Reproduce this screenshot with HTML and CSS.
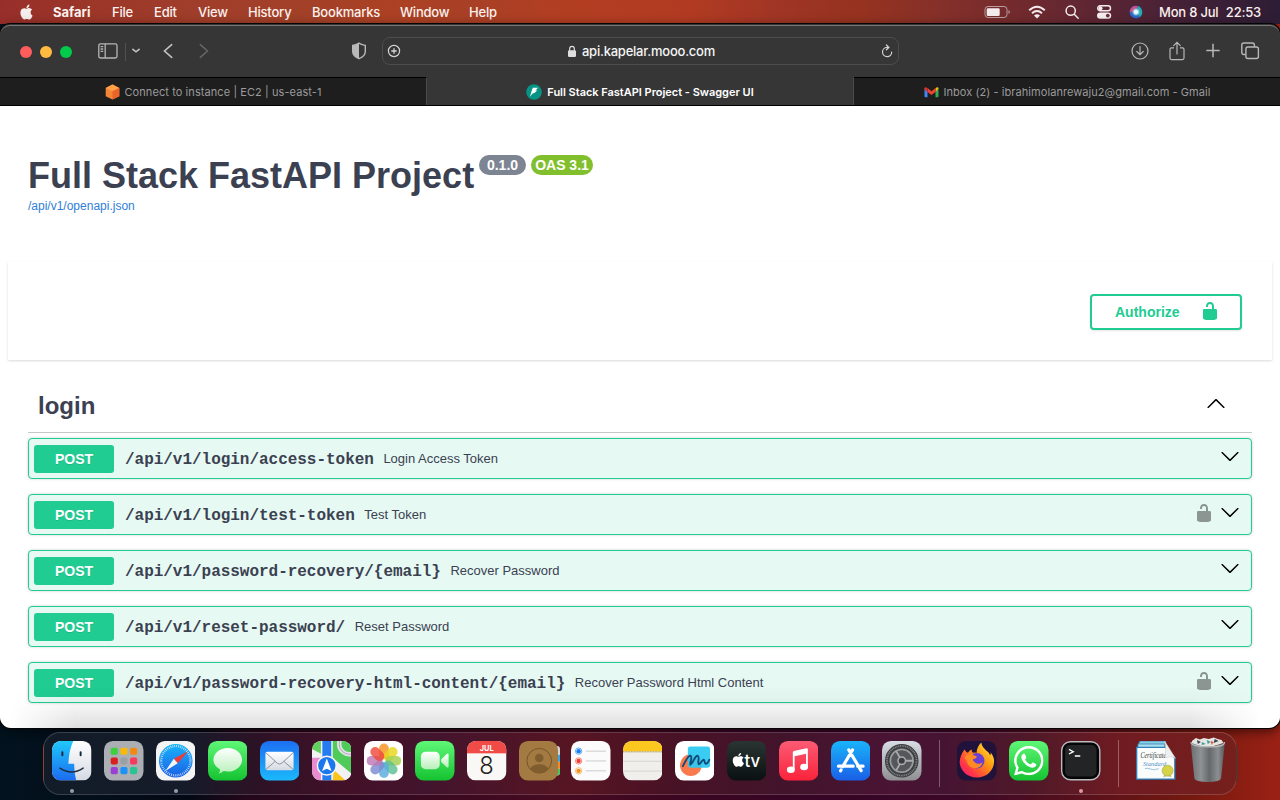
FILE: index.html
```html
<!DOCTYPE html>
<html lang="en">
<head>
<meta charset="utf-8">
<title>Full Stack FastAPI Project - Swagger UI</title>
<link rel="stylesheet" href="styles.css">
</head>
<body>
<svg class="defs" width="0" height="0">
  <defs>
    <symbol id="apple" viewBox="0 0 24 24"><path d="M12.152 6.896c-.948 0-2.415-1.078-3.96-1.04-2.04.027-3.91 1.183-4.961 3.014-2.117 3.675-.546 9.103 1.519 12.09 1.013 1.454 2.208 3.09 3.792 3.039 1.52-.065 2.09-.987 3.935-.987 1.831 0 2.35.987 3.96.948 1.637-.026 2.676-1.48 3.676-2.948 1.156-1.688 1.636-3.325 1.662-3.415-.039-.013-3.182-1.221-3.22-4.857-.026-3.04 2.48-4.494 2.597-4.559-1.429-2.09-3.623-2.324-4.39-2.376-2-.156-3.675 1.09-4.61 1.09zM15.53 3.83c.843-1.012 1.4-2.427 1.245-3.83-1.207.052-2.662.805-3.532 1.818-.78.896-1.454 2.338-1.273 3.714 1.338.104 2.715-.688 3.559-1.701"/></symbol>
    <symbol id="unlocked" viewBox="0 0 20 20"><path d="M15.8 8H14V5.6C14 2.703 12.665 1 10 1 7.334 1 6 2.703 6 5.6V6h2v-.801C8 3.754 8.797 3 10 3c1.203 0 2 .754 2 2.199V8H4c-.553 0-1 .646-1 1.199V17c0 .549.428 1.139.951 1.307l1.197.387C5.672 18.861 6.55 19 7.1 19h5.8c.549 0 1.428-.139 1.951-.307l1.196-.387c.524-.167.953-.757.953-1.306V9.199C17 8.646 16.352 8 15.8 8z"/></symbol>
    <symbol id="arrow" viewBox="0 0 20 20"><path d="M17.418 6.109c.272-.268.709-.268.979 0s.271.701 0 .969l-7.908 7.83c-.27.268-.707.268-.979 0l-7.908-7.83c-.27-.268-.27-.701 0-.969.271-.268.709-.268.979 0L10 13.25l7.418-7.141z"/></symbol>
    <linearGradient id="gBlue" x2="0" y2="1"><stop stop-color="#1d6ff2"/><stop offset="1" stop-color="#1bb8fb"/></linearGradient>
    <linearGradient id="gStore" x2="0" y2="1"><stop stop-color="#19b4fb"/><stop offset="1" stop-color="#1a5fe6"/></linearGradient>
    <linearGradient id="gFinder" x2="0" y2="1"><stop stop-color="#1fc8fb"/><stop offset="1" stop-color="#1b6cf0"/></linearGradient>
    <linearGradient id="gGreen" x2="0" y2="1"><stop stop-color="#5ff777"/><stop offset="1" stop-color="#15c331"/></linearGradient>
    <linearGradient id="gWhite" x2="0" y2="1"><stop stop-color="#fff"/><stop offset="1" stop-color="#d5dae3"/></linearGradient>
    <linearGradient id="gBubble" x2="0" y2="1"><stop stop-color="#fff"/><stop offset="1" stop-color="#b8f0b9"/></linearGradient>
    <linearGradient id="gMusic" x2="0" y2="1"><stop stop-color="#fb5b74"/><stop offset="1" stop-color="#fa233b"/></linearGradient>
    <linearGradient id="gGrey" x2="0" y2="1"><stop stop-color="#d7dde4"/><stop offset="1" stop-color="#8f8f92"/></linearGradient>
    <linearGradient id="gTv" x2="0" y2="1"><stop stop-color="#2a3533"/><stop offset="1" stop-color="#0a1011"/></linearGradient>
    <linearGradient id="gFox" x1="1" y1="0" x2="0" y2="1"><stop stop-color="#fff44f"/><stop offset=".4" stop-color="#ff980e"/><stop offset=".75" stop-color="#ff3647"/><stop offset="1" stop-color="#e31587"/></linearGradient>
    <linearGradient id="gBin" x2="1" y2="0"><stop stop-color="#6b6e70"/><stop offset=".3" stop-color="#8f9295"/><stop offset=".55" stop-color="#65696b"/><stop offset=".8" stop-color="#8c8f91"/><stop offset="1" stop-color="#55585a"/></linearGradient>
    <radialGradient id="gSiri"><stop stop-color="#fff"/><stop offset=".5" stop-color="#d5f3fb"/><stop offset="1" stop-color="#5cc8e0" stop-opacity=".2"/></radialGradient>
    <clipPath id="tile"><rect width="40" height="40" rx="9"/></clipPath>
  </defs>
</svg>

<header class="menubar">
  <svg class="apple-mark" width="15" height="15"><use href="#apple"/></svg>
  <nav class="menus">
    <span class="app-name">Safari</span><span>File</span><span>Edit</span><span>View</span><span>History</span><span>Bookmarks</span><span>Window</span><span>Help</span>
  </nav>
  <div class="status">
    <svg width="26" height="14" viewBox="0 0 26 14"><rect x="1" y="1.5" width="22" height="11" rx="3" fill="none" stroke="#b99da0"/><rect x="2.7" y="3.2" width="13" height="7.8" rx="1.3" fill="#f3ebec"/><path d="M24.5 5v4q1.3-.6 1.3-2t-1.3-2" fill="#b99da0"/></svg>
    <svg width="18" height="14" viewBox="0 0 18 14" fill="none" stroke="#f4ecee" stroke-width="2"><path d="M1.2 5.2Q9-1.8 16.8 5.2M4 8.2q5-4.3 10 0"/><path d="M6 10.4q3-2.2 6 0l-3 3z" fill="#f4ecee" stroke="none"/></svg>
    <svg width="14" height="14" viewBox="0 0 14 14" fill="none" stroke="#f4ecee" stroke-width="1.5"><circle cx="5.7" cy="5.7" r="4.6"/><path d="m9.2 9.2 4 4" stroke-linecap="round"/></svg>
    <svg width="16" height="14" viewBox="0 0 16 14"><rect x="1.7" y=".8" width="12.8" height="5" rx="2.5" fill="none" stroke="#f4ecee" stroke-width="1.4"/><circle cx="4.5" cy="3.3" r="2" fill="#f4ecee"/><rect x="1" y="7.4" width="14.2" height="6.4" rx="3.2" fill="#f4ecee"/><circle cx="11.8" cy="10.6" r="1.9" fill="#6c3040"/></svg>
    <svg width="14" height="14" viewBox="0 0 14 14"><circle cx="7" cy="7" r="6.9" fill="#2a2e55"/><path d="M.6 7A6.400 6.400 0 0 1 9 1L7 7z" fill="#c8508c"/><path d="M9 1A6.400 6.400 0 0 1 10.500 12.300L7 7z" fill="#2aa7b0"/><path d="M10.500 12.300A6.400 6.400 0 0 1 .6 7H7z" fill="#3465c7"/><circle cx="7" cy="7" r="4" fill="url(#gSiri)"/></svg>
    <span class="clock"><span>Mon 8 Jul</span><span>22:53</span></span>
  </div>
</header>

<main class="window">
  <div class="toolbar">
    <div class="lights"><i class="close"></i><i class="min"></i><i class="max"></i></div>
    <svg class="i-sidebar" width="20" height="16" viewBox="0 0 20 16" fill="none" stroke="#b5b5b5" stroke-width="1.3"><rect x=".8" y=".8" width="18.2" height="14.2" rx="1.8"/><path d="M7.2 1v14M2.6 3.7h2.6M2.6 6h2.6M2.6 8.3h2.6" /></svg>
    <i class="bar-divider"></i>
    <svg class="i-drop" width="10" height="6" viewBox="0 0 10 6"><path d="m1.9 1.3 3.1 2.500 3.100-2.500" fill="none" stroke="#c2c2c2" stroke-width="1.6" stroke-linecap="round"/></svg>
    <svg class="i-back" width="10" height="16" viewBox="0 0 10 16"><path d="M8.7 1.6 1.5 8l7.2 6.4" fill="none" stroke="#c2c2c2" stroke-width="1.6" stroke-linecap="round"/></svg>
    <svg class="i-forward" width="10" height="16" viewBox="0 0 10 16"><path d="M1.3 1.6 8.5 8l-7.2 6.4" fill="none" stroke="#656565" stroke-width="1.5" stroke-linecap="round"/></svg>
    <svg class="i-shield" width="16" height="18" viewBox="0 0 16 18"><path d="M8 1.2Q11 3 14.3 3.4v6.1q0 4.5-6.3 7.2-6.3-2.7-6.3-7.2V3.4Q5 3 8 1.2z" fill="none" stroke="#b9b9b9" stroke-width="1.4"/><path d="M8 1.2v15.5Q1.7 14 1.7 9.5V3.4Q5 3 8 1.2z" fill="#b9b9b9"/></svg>
    <div class="address">
      <svg width="14" height="14" viewBox="0 0 14 14" fill="none" stroke="#d5d5d5" stroke-width="1.2"><circle cx="7" cy="7" r="5.6"/><path d="M7 4.300v5.400M4.300 7h5.400" stroke-width="1.3"/></svg>
      <span class="host"><svg width="10" height="13" viewBox="0 0 10 13"><rect x="1" y="5.3" width="8" height="6.7" rx="1.2" fill="#dedede"/><path d="M2.7 6V3.6a2.3 2.3 0 0 1 4.6 0V6" fill="none" stroke="#dedede" stroke-width="1.2"/></svg><b>api.kapelar.mooo.com</b></span>
      <svg width="12" height="14" viewBox="0 0 12 14" fill="none" stroke="#d5d5d5" stroke-width="1.2"><path d="M7.500 3.400H6A4.600 4.600 0 1 0 10.700 8M5.400 1l2.500 2.400-2.500 2.400" stroke-linecap="round"/></svg>
    </div>
    <div class="actions">
      <svg width="20" height="20" viewBox="0 0 20 20" fill="none" stroke="#b8b8b8" stroke-width="1.2"><circle cx="10" cy="10" r="8"/><path d="M10 5.5v8M6.8 10.5l3.2 3.2 3.2-3.2" stroke-linecap="round"/></svg>
      <svg width="18" height="20" viewBox="0 0 18 20" fill="none" stroke="#b8b8b8" stroke-width="1.2"><path d="M6 6.800H3.500q-1.500 0-1.500 1.500v8.800q0 1.500 1.500 1.500h11q1.500 0 1.500-1.500V8.300q0-1.500-1.500-1.500H12"/><path d="M9 13V1.500M5.7 4.6 9 1.3l3.3 3.3" stroke-linecap="round"/></svg>
      <svg width="16" height="20" viewBox="0 0 16 20" stroke="#b8b8b8" stroke-width="1.5"><path d="M8 2.8v13.4M1.3 9.5h13.4"/></svg>
      <svg width="20" height="20" viewBox="0 0 20 20" fill="none" stroke="#b8b8b8" stroke-width="1.4"><rect x="5.900" y="6" width="12.500" height="11.500" rx="2"/><path d="M5.500 13.500H4q-2.200 0-2.200-2.200V4q0-2 2.200-2h8.200q2.200 0 2.200 2v2"/></svg>
    </div>
  </div>
  <div class="tabs">
    <div class="tab">
      <svg width="15" height="16" viewBox="0 0 15 16"><path d="M7.500.6 14.300 4v8.200l-6.800 3.300-6.800-3.300V4z" fill="#f58536"/><path d="M7.500.6 14.300 4 7.500 7.200.7 4z" fill="#ffa047"/><path d="M7.500 7.200 14.300 4v8.200l-6.800 3.300z" fill="#e9632b"/></svg>
      <span>Connect to instance | EC2 | us-east-1</span>
    </div>
    <div class="tab current">
      <svg width="16" height="16" viewBox="0 0 16 16"><circle cx="8" cy="8" r="7.800" fill="#069486"/><path d="M6.800 3.800h5.200L9.600 6.400h1.700L8 9.300H6.800L4 12.800l1.200-4.500z" fill="#fff"/></svg>
      <span>Full Stack FastAPI Project - Swagger UI</span>
    </div>
    <div class="tab mail">
      <svg width="15" height="12" viewBox="0 0 15 12"><path d="M.5 2v8.2q0 1 1 1h2V5z" fill="#4285f4"/><path d="M14.5 2v8.2q0 1-1 1h-2V5z" fill="#34a853"/><path d="m11.5 2.2.9-.8q2.1-.8 2.1 1.2L11.5 6z" fill="#fbbc04"/><path d="m3.5 2 4 3.2 4-3.2v4l-4 3.1-4-3.1z" fill="#ea4335"/><path d="M.5 2.6q0-2 2.1-1.2l.9.8V6l-3-2.3z" fill="#d93025"/></svg>
      <span>Inbox (2) - ibrahimolanrewaju2@gmail.com - Gmail</span>
    </div>
  </div>

  <section class="page">
    <div class="info">
      <h1>Full Stack FastAPI Project</h1>
      <span class="pill version">0.1.0</span><span class="pill oas">OAS 3.1</span>
      <a class="spec-link">/api/v1/openapi.json</a>
    </div>
    <div class="schemes">
      <button class="authorize"><span>Authorize</span><svg width="20" height="20"><use href="#unlocked"/></svg></button>
    </div>
    <div class="tag">
      <h2>login</h2>
      <svg class="up" width="20" height="20"><use href="#arrow"/></svg>
    </div>
    <div class="operations">
      <div class="op"><b class="method">POST</b><code>/api/v1/login/access-token</code><span class="summary">Login Access Token</span><svg class="down" width="20" height="20"><use href="#arrow"/></svg></div>
      <div class="op"><b class="method">POST</b><code>/api/v1/login/test-token</code><span class="summary">Test Token</span><svg class="lock" width="20" height="20"><use href="#unlocked"/></svg><svg class="down" width="20" height="20"><use href="#arrow"/></svg></div>
      <div class="op"><b class="method">POST</b><code>/api/v1/password-recovery/{email}</code><span class="summary">Recover Password</span><svg class="down" width="20" height="20"><use href="#arrow"/></svg></div>
      <div class="op"><b class="method">POST</b><code>/api/v1/reset-password/</code><span class="summary">Reset Password</span><svg class="down" width="20" height="20"><use href="#arrow"/></svg></div>
      <div class="op"><b class="method">POST</b><code>/api/v1/password-recovery-html-content/{email}</code><span class="summary">Recover Password Html Content</span><svg class="lock" width="20" height="20"><use href="#unlocked"/></svg><svg class="down" width="20" height="20"><use href="#arrow"/></svg></div>
    </div>
    <div class="page-shade"></div>
  </section>
</main>

<footer class="dock">
  <!-- Finder -->
  <div class="slot running"><svg viewBox="0 0 40 40"><g clip-path="url(#tile)"><rect width="40" height="40" fill="url(#gWhite)"/><path d="M0 0h21.5Q17 10 16.600 23h5.900q-.2 9 2 17H0z" fill="url(#gFinder)"/></g><path d="M10.500 11.500v3M29 11.500v3" stroke="#172b40" stroke-width="2" stroke-linecap="round"/><path d="M8 27.500q12 8 23.500 0" fill="none" stroke="#202c3c" stroke-width="1.500" stroke-linecap="round"/></svg></div>
  <!-- Launchpad -->
  <div class="slot"><svg viewBox="0 0 40 40"><rect width="40" height="40" rx="9" fill="#abafb4"/><g><rect x="6.800" y="6.800" width="7.200" height="7.200" rx="1.800" fill="#3ecf3d"/><rect x="16.600" y="6.800" width="7.200" height="7.200" rx="1.800" fill="#f9b90b"/><rect x="26.400" y="6.800" width="7.200" height="7.200" rx="1.800" fill="#f28a12"/><rect x="6.800" y="16.600" width="7.200" height="7.200" rx="1.800" fill="#d9201c"/><rect x="16.600" y="16.600" width="7.200" height="7.200" rx="1.800" fill="#9aa0a6"/><rect x="26.400" y="16.600" width="7.200" height="7.200" rx="1.800" fill="#f73a5d"/><rect x="6.800" y="26.400" width="7.200" height="7.200" rx="1.800" fill="#9a41d4"/><rect x="16.600" y="26.400" width="7.200" height="7.200" rx="1.800" fill="#1a93f5"/><rect x="26.400" y="26.400" width="7.200" height="7.200" rx="1.800" fill="#28c391"/></g></svg></div>
  <!-- Safari -->
  <div class="slot running"><svg viewBox="0 0 40 40"><rect width="40" height="40" rx="9" fill="#f4f4f5"/><circle cx="20" cy="20" r="17" fill="url(#gStore)"/><circle cx="20" cy="20" r="14.800" fill="none" stroke="#e3f3ff" stroke-width="2.400" stroke-dasharray=".7 1.240"/><path d="M32.500 10.500 22 22.500 18 18z" fill="#f03a35"/><path d="M9.500 30.500 18 18l4 4.500z" fill="#f3f5f7"/></svg></div>
  <!-- Messages -->
  <div class="slot"><svg viewBox="0 0 40 40"><rect width="40" height="40" rx="9" fill="url(#gGreen)"/><path d="M20 7c8.200 0 14.500 5.400 14.500 12S28.200 31 20 31q-2.200 0-4.200-.5-2 2-5 2.300 1.600-2 1.400-4Q5.500 25 5.500 19C5.500 12.400 11.800 7 20 7z" fill="url(#gBubble)"/></svg></div>
  <!-- Mail -->
  <div class="slot"><svg viewBox="0 0 40 40"><rect width="40" height="40" rx="9" fill="url(#gBlue)"/><rect x="5.500" y="11" width="28.500" height="18.500" rx="2" fill="url(#gWhite)"/><path d="m6 12 11.500 10.500q2.300 1.800 4.600 0L33.500 12M6 28.700l9.500-8.200M33.500 28.700 24 20.500" fill="none" stroke="#8b929b" stroke-width="1"/></svg></div>
  <!-- Maps -->
  <div class="slot"><svg viewBox="0 0 40 40"><g clip-path="url(#tile)"><rect width="40" height="40" fill="#f2f2f2"/><path d="M0 0h9v13L0 8z" fill="#65cf61"/><path d="M21 0h19v33L21 17z" fill="#4ecb59"/><path d="M0 17h9v23H0z" fill="#e88bd0"/><path d="M10.500 0h9v40h-9z" fill="#247cf0"/><path d="M22 29 34 40H21z" fill="#f9c51d"/><circle cx="38" cy="3" r="10.500" fill="none" stroke="#e0e2e6" stroke-width="4.500"/><circle cx="38" cy="3" r="10.500" fill="none" stroke="#aaaeb3" stroke-width="1"/></g><circle cx="15" cy="25" r="9.500" fill="#1a78ee" stroke="#f5f5f5" stroke-width="1.500"/><path d="m15 17.800 4.800 12.500-4.800-2.300-4.800 2.300z" fill="#fff"/></svg></div>
  <!-- Photos -->
  <div class="slot"><svg viewBox="0 0 40 40"><rect width="40" height="40" rx="9" fill="#fff"/><g class="petals"><rect x="15.300" y="2.500" width="9.800" height="16" rx="4.900" fill="#f99321"/><rect x="15.300" y="2.500" width="9.800" height="16" rx="4.900" fill="#e8d61c" transform="rotate(45 20.200 20)"/><rect x="15.300" y="2.500" width="9.800" height="16" rx="4.900" fill="#a4d04a" transform="rotate(90 20.200 20)"/><rect x="15.300" y="2.500" width="9.800" height="16" rx="4.900" fill="#5ebf93" transform="rotate(135 20.200 20)"/><rect x="15.300" y="2.500" width="9.800" height="16" rx="4.900" fill="#59acdf" transform="rotate(180 20.200 20)"/><rect x="15.300" y="2.500" width="9.800" height="16" rx="4.900" fill="#7d89cf" transform="rotate(225 20.200 20)"/><rect x="15.300" y="2.500" width="9.800" height="16" rx="4.900" fill="#bd78b5" transform="rotate(270 20.200 20)"/><rect x="15.300" y="2.500" width="9.800" height="16" rx="4.900" fill="#ef4b3b" transform="rotate(315 20.200 20)"/></g></svg></div>
  <!-- FaceTime -->
  <div class="slot"><svg viewBox="0 0 40 40"><rect width="40" height="40" rx="9" fill="url(#gGreen)"/><rect x="6" y="11" width="19" height="17.500" rx="4.500" fill="url(#gBubble)"/><path d="M26.500 18.500 32.300 13q1.700-1 1.700 1v11.500q0 2-1.700 1l-5.800-5.200z" fill="url(#gBubble)"/></svg></div>
  <!-- Calendar -->
  <div class="slot"><svg viewBox="0 0 40 40"><g clip-path="url(#tile)"><rect width="40" height="40" fill="#f9f8f7"/><rect width="40" height="12.500" fill="#f04b46"/></g><text x="20" y="9.800" class="cal-month">JUL</text><text x="19.800" y="33.500" class="cal-day">8</text></svg></div>
  <!-- Contacts -->
  <div class="slot"><svg viewBox="0 0 40 40" overflow="visible"><rect x="30" y="5" width="11.500" height="30" rx="3" fill="#d7d7d9"/><path d="M38 14h3.500v7H38z" fill="#36a6e5"/><path d="M38 21h3.500v7H38z" fill="#f58a20"/><path d="M38 28h3.500v4q0 2-2 3H38z" fill="#45c95a"/><rect width="39.500" height="40" rx="9" fill="#a27a42"/><g fill="none" stroke="#755427" stroke-width="1"><circle cx="20.500" cy="20" r="12.500"/></g><circle cx="20.500" cy="17.300" r="4.300" fill="#805d2e"/><path d="M11 28q3.500-4.500 9.500-4.500T30 28q-4 4.300-9.500 4.300T11 28z" fill="#805d2e"/></svg></div>
  <!-- Reminders -->
  <div class="slot"><svg viewBox="0 0 40 40"><rect width="40" height="40" rx="9" fill="#fbfbfb"/><path d="M15 10.300h20.500M15 20.200h20.500M15 30.200h20.500" stroke="#cbcbcb" stroke-width="1"/><g fill="none" stroke-width="1"><circle cx="7.700" cy="10.300" r="3.200" stroke="#5aa9f3"/><circle cx="7.700" cy="20.200" r="3.200" stroke="#f5857c"/><circle cx="7.700" cy="30.200" r="3.200" stroke="#f8bb6c"/></g><circle cx="7.700" cy="10.300" r="2.200" fill="#187cf0"/><circle cx="7.700" cy="20.200" r="2.200" fill="#f33b32"/><circle cx="7.700" cy="30.200" r="2.200" fill="#f3901c"/></svg></div>
  <!-- Notes -->
  <div class="slot"><svg viewBox="0 0 40 40"><g clip-path="url(#tile)"><rect width="40" height="40" fill="#f0efeb"/><rect width="40" height="10.500" fill="#fcc81f"/><path d="M0 11h40" stroke="#a6915a" stroke-dasharray="1 .6"/><path d="M0 20.500h40M0 30.500h40" stroke="#d0cfcc" stroke-width=".8"/></g></svg></div>
  <!-- Freeform -->
  <div class="slot"><svg viewBox="0 0 40 40"><rect width="40" height="40" rx="9" fill="#fff"/><circle cx="16" cy="24.500" r="11" fill="#fb7a4d"/><rect x="13" y="5.500" width="22.500" height="21.500" rx="2.500" fill="#2bc9f2" opacity=".93"/><path d="M8 25.500Q13.500 14 15.800 15c2.200 1-.8 6.500-.3 9 3-1.500 4.500-9.500 7.500-9 2.500.5-.5 7 1 8.500 2 .5 3-4.500 5-4.500 1.500.2.500 3.500 2 4 1.500.3 3-2 3.700-4" fill="none" stroke="#104a7a" stroke-width="1.900" stroke-linecap="round" stroke-linejoin="round"/></svg></div>
  <!-- TV -->
  <div class="slot"><svg viewBox="0 0 40 40"><rect width="40" height="40" rx="9" fill="url(#gTv)"/><use href="#apple" x="4.500" y="11.800" width="14" height="14.500" fill="#fff"/><text x="17.800" y="26" class="tv-text">tv</text></svg></div>
  <!-- Music -->
  <div class="slot"><svg viewBox="0 0 40 40"><rect width="40" height="40" rx="9" fill="url(#gMusic)"/><path d="M14 11.300q0-1 1-1.200l13-2.700q1.200-.2 1.200 1v17.800h-1.800V13l-11.600 2.400V29H14z" fill="#fff"/><ellipse cx="12" cy="29.200" rx="4" ry="3.300" fill="#fff"/><ellipse cx="25.400" cy="26.300" rx="4" ry="3.300" fill="#fff"/></svg></div>
  <!-- App Store -->
  <div class="slot"><svg viewBox="0 0 40 40"><rect width="40" height="40" rx="9" fill="url(#gStore)"/><g fill="none" stroke="#fff" stroke-width="3.200" stroke-linecap="round"><path d="m21.800 9-10 17M18 9l12.500 21M7.500 25.500h15M27 25.500h5.500M10.200 29.200l-.5 1"/></g></svg></div>
  <!-- System Preferences -->
  <div class="slot"><svg viewBox="0 0 40 40"><rect width="40" height="40" rx="9" fill="url(#gGrey)"/><circle cx="20" cy="20" r="17" fill="#3b3e40"/><circle cx="20" cy="20" r="15" fill="none" stroke="#85878a" stroke-width="1.800" stroke-dasharray="1 .8"/><circle cx="20" cy="20" r="11.500" fill="#55575a" stroke="#999b9d" stroke-width="1.800"/><g stroke="#a9abad" stroke-width="1.800"><path d="M20 20h11.500M20 20l-5.800-10M20 20l-5.800 10"/></g><circle cx="20" cy="20" r="3.800" fill="#3b3e40" stroke="#a9abad" stroke-width="1.500"/></svg></div>
  <i class="dock-divider"></i>
  <!-- Firefox -->
  <div class="slot"><svg viewBox="0 0 40 40"><rect width="40" height="40" rx="9" fill="#20123a"/><path d="M7.500 8.500q1.500 2.500 3.500 3.500 2-3 4-3.500-.5 2 1 3.500 2-.5 4 0-.5-5 4.500-10.500.8 4.500 5 8 3 1.500 4 5 1-1 .5-3Q38 17 37.500 21A17.400 16 0 0 1 2.700 21Q3 15 7.500 8.500z" fill="url(#gFox)"/><circle cx="20" cy="20" r="7.800" fill="#6a3fd4"/><path d="M7.500 17q3-5 7.500-4 2 2.500 5 2.500 0 2.500-4 3 .5 3 4.500 4.500 3 .5 5.500-1.500-2 6.500-8.500 6-6.500-1-7.500-7z" fill="#ff8a24"/></svg></div>
  <!-- WhatsApp -->
  <div class="slot"><svg viewBox="0 0 40 40"><rect width="40" height="40" rx="9" fill="url(#gGreen)"/><svg x="5" y="5" width="30" height="30" viewBox="0 0 24 24"><path fill="#fff" d="M17.472 14.382c-.297-.149-1.758-.867-2.03-.967-.273-.099-.471-.148-.67.15-.197.297-.767.966-.94 1.164-.173.199-.347.223-.644.075-.297-.15-1.255-.463-2.39-1.475-.883-.788-1.48-1.761-1.653-2.059-.173-.297-.018-.458.13-.606.134-.133.298-.347.446-.52.149-.174.198-.298.298-.497.099-.198.05-.371-.025-.52-.075-.149-.669-1.612-.916-2.207-.242-.579-.487-.5-.669-.51-.173-.008-.371-.01-.57-.01-.198 0-.52.074-.792.372-.272.297-1.04 1.016-1.04 2.479 0 1.462 1.065 2.875 1.213 3.074.149.198 2.096 3.2 5.077 4.487.709.306 1.262.489 1.694.625.712.227 1.36.195 1.871.118.571-.085 1.758-.719 2.006-1.413.248-.694.248-1.289.173-1.413-.074-.124-.272-.198-.57-.347m-5.421 7.403h-.004a9.87 9.87 0 01-5.031-1.378l-.361-.214-3.741.982.998-3.648-.235-.374a9.86 9.86 0 01-1.51-5.26c.001-5.45 4.436-9.884 9.888-9.884 2.64 0 5.122 1.03 6.988 2.898a9.825 9.825 0 012.893 6.994c-.003 5.45-4.437 9.884-9.885 9.884m8.413-18.297A11.815 11.815 0 0012.05 0C5.495 0 .16 5.335.157 11.892c0 2.096.547 4.142 1.588 5.945L.057 24l6.305-1.654a11.882 11.882 0 005.683 1.448h.005c6.554 0 11.89-5.335 11.893-11.893a11.821 11.821 0 00-3.48-8.413z"/></svg></svg></div>
  <!-- Terminal -->
  <div class="slot running warm"><svg viewBox="0 0 40 40"><rect x=".7" y=".7" width="38.600" height="38.600" rx="9" fill="#050505" stroke="#b9bdc2" stroke-width="1.400"/><rect x="4" y="4" width="32" height="32" rx="5" fill="#232425"/><path d="m8 8.500 4.500 2.300L8 13.200M14 15.200h5.500" fill="none" stroke="#fff" stroke-width="1.300"/></svg></div>
  <i class="dock-divider"></i>
  <!-- Documents stack -->
  <div class="slot"><svg viewBox="0 0 40 40"><path d="M4 0h26v10H2V4z" fill="#8bd0ea" stroke="#317ba6" stroke-width=".8"/><path d="M2 3h27v9H2z" fill="#a6deef" stroke="#317ba6" stroke-width=".8"/><path d="M.7 6.500h29L39.300 17.500V38.500H.7z" fill="#fafcfc" stroke="#2d7fb9" stroke-width="1.300"/><text x="4.500" y="17" class="cert-title" textLength="26" lengthAdjust="spacingAndGlyphs">Certificate</text><path d="M29 0 40 17.500q-5-3-10.500-.5Q31 9 29 0z" fill="#eef0f0" stroke="#c3c7c9" stroke-width=".5"/><text x="7" y="25" class="cert-sub">Standard</text><path d="M9 28q3-1 6 .5t8-.5" fill="none" stroke="#81b3d8" stroke-width=".8"/><path d="m29 33-1.500 4 4.500-1.500 4 1.500-1.500-4" fill="#bfc79a"/><circle cx="32" cy="30" r="5.500" fill="#d5d348" stroke="#a9a83f" stroke-width=".7"/></svg></div>
  <!-- Trash -->
  <div class="slot"><svg viewBox="0 0 40 40" overflow="visible"><path d="M4 0 8-3l4 1.500L16-3l5 1 5-1.500L30-2l4 1 2 3-16 5L4 3z" fill="#e5e5e2"/><path d="m9-1 4 2-3 2zM27-2l4 2-5 2z" fill="#39434e"/><path d="m14 1 4 2-4 1zM19-1l4 2-3 2z" fill="#3f9b9b"/><path d="m23 0 3 1-2 3z" fill="#dc583b"/><path d="M2.700 1.500q17.300 8 34.600 0L33.500 38q-1 3.500-13.500 3.500T6.500 38z" fill="url(#gBin)"/><path d="M3 1q0 4.500 17 5T37 1" fill="none" stroke="#bcbec0" stroke-width="1.200"/></svg></div>
</footer>
</body>
</html>
```

FILE: styles.css
```css
* { box-sizing: border-box; }

body {
  margin: 0;
  width: 1280px;
  height: 800px;
  overflow: hidden;
  display: flex;
  flex-direction: column;
  font-family: Inter, "Liberation Sans", sans-serif;
  background: linear-gradient(90deg, #02131f 0, #030914 190px, #24071b 245px, #350820 390px, #470b20 560px, #390522 700px, #360526 850px, #3c0827 960px, #57101c 1080px, #74190f 1190px, #9c2115 1280px);
}

.defs { position: absolute; }
svg { display: block; flex: none; }
i { display: block; flex: none; }

/* Menu bar */
.menubar {
  height: 24px;
  flex: none;
  display: flex;
  align-items: center;
  padding: 0 19px 1px 19px;
  color: #fbf1ee;
  font-size: 13px;
  font-weight: 500;
  letter-spacing: -.2px;
  background: linear-gradient(90deg, #982e2a 0, #9b3629 90px, #a03e2b 200px, #a24028 300px, #ac4124 400px, #a84026 470px, #b23e22 560px, #b13b22 690px, #a03525 780px, #96321f 860px, #85302a 940px, #712a2d 1020px, #592534 1110px, #3f2036 1200px, #2d1d36 1280px);
}
.apple-mark { fill: #f7ecec; width: 15px; height: 16px; }
.menus { display: grid; grid-template-columns: 59px 42px 44px 50px 64px 88px 69px 40px; margin-left: 19px; white-space: nowrap; }
.app-name { font-weight: 700; letter-spacing: 0; }
.status { display: flex; align-items: center; margin-left: auto; }
.status svg:nth-child(1) { margin-right: 18px; }
.status svg:nth-child(2) { margin-right: 19px; }
.status svg:nth-child(3) { margin-right: 17px; }
.status svg:nth-child(4) { margin-right: 17px; }
.clock { display: flex; justify-content: space-between; width: 102px; margin-left: 16px; }

/* Browser window */
.window {
  height: 704px;
  flex: none;
  display: flex;
  flex-direction: column;
  border-radius: 10px 10px 11px 11px;
  overflow: hidden;
  background: #363636;
  box-shadow: 0 0 0 1px #050505, 0 3px 12px rgba(0, 0, 0, .6);
}
.toolbar {
  height: 53px;
  flex: none;
  display: flex;
  align-items: center;
  padding-left: 20px;
  border-top: 1px solid #767676;
  border-radius: 10px 10px 0 0;
  margin-top: 1px;
}
.lights { display: flex; gap: 8px; }
.lights i { width: 12px; height: 12px; margin-top: -1px; border-radius: 50%; }
.close { background: #ff5d5b; }
.min { background: #ffbb3f; }
.max { background: #00cb4a; }
.toolbar > svg { margin-top: -2px; }
.toolbar > .i-sidebar { margin-left: 26px; }
.bar-divider { width: 1px; height: 18px; margin-left: 7px; background: #505050; }
.toolbar > .i-drop { margin-left: 5px; }
.toolbar > .i-back { margin-left: 22px; }
.toolbar > .i-forward { margin-left: 26px; }
.toolbar > .i-shield { margin-left: 142px; }
.address {
  display: flex;
  align-items: center;
  justify-content: space-between;
  width: 517px;
  height: 28px;
  margin: -2px 0 0 15px;
  padding: 0 5px 0 4px;
  border: 1px solid #4d4d4d;
  border-radius: 8px;
}
.host { display: flex; align-items: center; gap: 5px; color: #f5f5f5; font-size: 13px; }
.host b { font-weight: 500; letter-spacing: -.23px; }
.actions { display: flex; align-items: center; gap: 18px; margin: -3px 0 0 231px; }
.actions svg:nth-child(3) { margin-left: 1px; }
.actions svg:nth-child(4) { margin-left: 1px; }

.tabs { display: grid; grid-template-columns: 427px 427px 426px; height: 29px; flex: none; border-bottom: 1px solid #000; margin-top: -1px; }
.tab { display: flex; align-items: center; justify-content: center; gap: 5px; background: #1e1e1e; border-top: 1px solid #000; border-right: 1px solid #4a4a4a; color: #9b9b9b; font-size: 11px; font-weight: 400; letter-spacing: .08px; white-space: nowrap; }
.tab.current { background: #363636; border-top-color: #363636; color: #fff; font-weight: 600; letter-spacing: -.02px; }
.tab.mail { letter-spacing: .06px; border-right: 0; }

/* API documentation page */
.page { flex: 1; position: relative; background: #fff; color: #3b4151; font-family: "Liberation Sans", Arial, sans-serif; }
.info { display: flex; flex-wrap: wrap; align-items: flex-start; align-content: flex-start; height: 156px; padding: 49px 28px 0; }
h1 { margin: 0; font-size: 36px; line-height: 41px; width: 446px; white-space: nowrap; }
.pill { height: 20px; border-radius: 20px; color: #fff; font-size: 14px; line-height: 20px; font-weight: 700; text-align: center; white-space: nowrap; }
.version { width: 47px; margin-left: 5px; background: #7d8492; }
.oas { width: 62px; margin-left: 5px; background: #81bf2d; }
.spec-link { width: 100%; margin-top: 3px; color: #2f80d8; font-size: 12px; line-height: 14px; }
.schemes { display: flex; justify-content: flex-end; align-items: center; height: 98px; margin: 0 8px; padding: 2px 30px 0; background: #fff; box-shadow: 0 1px 2px rgba(0, 0, 0, .15); }
.authorize { display: flex; align-items: center; justify-content: space-between; width: 152px; height: 36px; padding: 0 20.500px 0 23px; border: 2px solid #20cc92; border-radius: 4px; background: #fff; color: #20cc92; fill: #20cc92; font: 700 14px "Liberation Sans", sans-serif; box-shadow: 0 1px 2px rgba(0, 0, 0, .1); }
.authorize svg { margin-bottom: 2px; }
.tag { display: flex; align-items: center; justify-content: space-between; height: 59px; margin: 14px 28px 0; padding: 0 26px 0 10px; border-bottom: 1px solid rgba(59, 65, 81, .3); }
.tag h2 { margin: 5px 0 0; font-size: 24px; line-height: 28px; }
.up { margin-top: 2px; transform: scaleY(-1); }
.operations { display: flex; flex-direction: column; gap: 15px; margin: 5px 28px 0; }
.op { display: flex; align-items: center; height: 41px; padding: 0 11px 0 5px; border: 1px solid #20cc92; border-radius: 4px; background: #e6f9f3; box-shadow: 0 0 3px rgba(0, 0, 0, .19); }
.method { width: 80px; height: 28px; margin-top: 1px; border-radius: 3px; background: #20cc92; color: #fff; font-size: 14px; line-height: 28px; text-align: center; text-shadow: 0 1px 0 rgba(0, 0, 0, .1); }
.op code { margin: 2px 0 0 11px; font: 700 16px "Liberation Mono", monospace; letter-spacing: -.03px; }
.summary { flex: 1; margin-left: 9.500px; font-size: 13px; }
.down { margin: -6px 0 0; }
.lock { margin: -4px 6px 0 0; fill: #8b9592; }
.page-shade { position: absolute; left: 0; right: 0; bottom: 0; height: 42px; background: linear-gradient(transparent, rgba(0, 0, 0, .035) 45%, rgba(0, 0, 0, .13)); -webkit-mask-image: linear-gradient(90deg, transparent 10px, #000 75px, #000 1190px, transparent 1260px); }

/* Dock */
.dock {
  display: flex;
  align-items: center;
  width: 1194px;
  height: 63px;
  margin: 4px 0 0 43px;
  padding: 0 2px;
  border: 1px solid rgba(255, 255, 255, .16);
  border-radius: 17px;
  background: linear-gradient(90deg, #121c28 0, #151b2a 140px, #2d1225 215px, #421128 300px, #43142d 385px, #571522 530px, #491225 620px, #42142b 740px, #4a1434 850px, #461433 900px, #511928 990px, #701b21 1080px, #76201c 1194px);
}
.slot { display: flex; flex-direction: column; align-items: center; width: 51.900px; height: 61px; padding-top: 8px; flex: none; }
.slot svg { width: 39.500px; height: 39.500px; }
.slot svg svg { width: 30px; height: 30px; }
.slot.running::after { content: ""; width: 4px; height: 4px; margin-top: 8.500px; border-radius: 50%; background: #959ba8; }
.slot.warm::after { background: #e396a4; }
.dock-divider { width: 1px; height: 47px; margin: 0 11px; background: rgba(255, 255, 255, .3); }
.petals rect { opacity: .82; }
.cal-month { font: 700 7.500px Inter, sans-serif; fill: #fff; text-anchor: middle; }
.cal-day { font: 300 24px Inter, sans-serif; fill: #222; text-anchor: middle; }
.tv-text { font: 500 17px Inter, sans-serif; fill: #fff; }
.cert-title { font: italic 8.500px "Liberation Serif", serif; fill: #333; }
.cert-sub { font: italic 6.500px "Liberation Serif", serif; fill: #5292c8; }
```
